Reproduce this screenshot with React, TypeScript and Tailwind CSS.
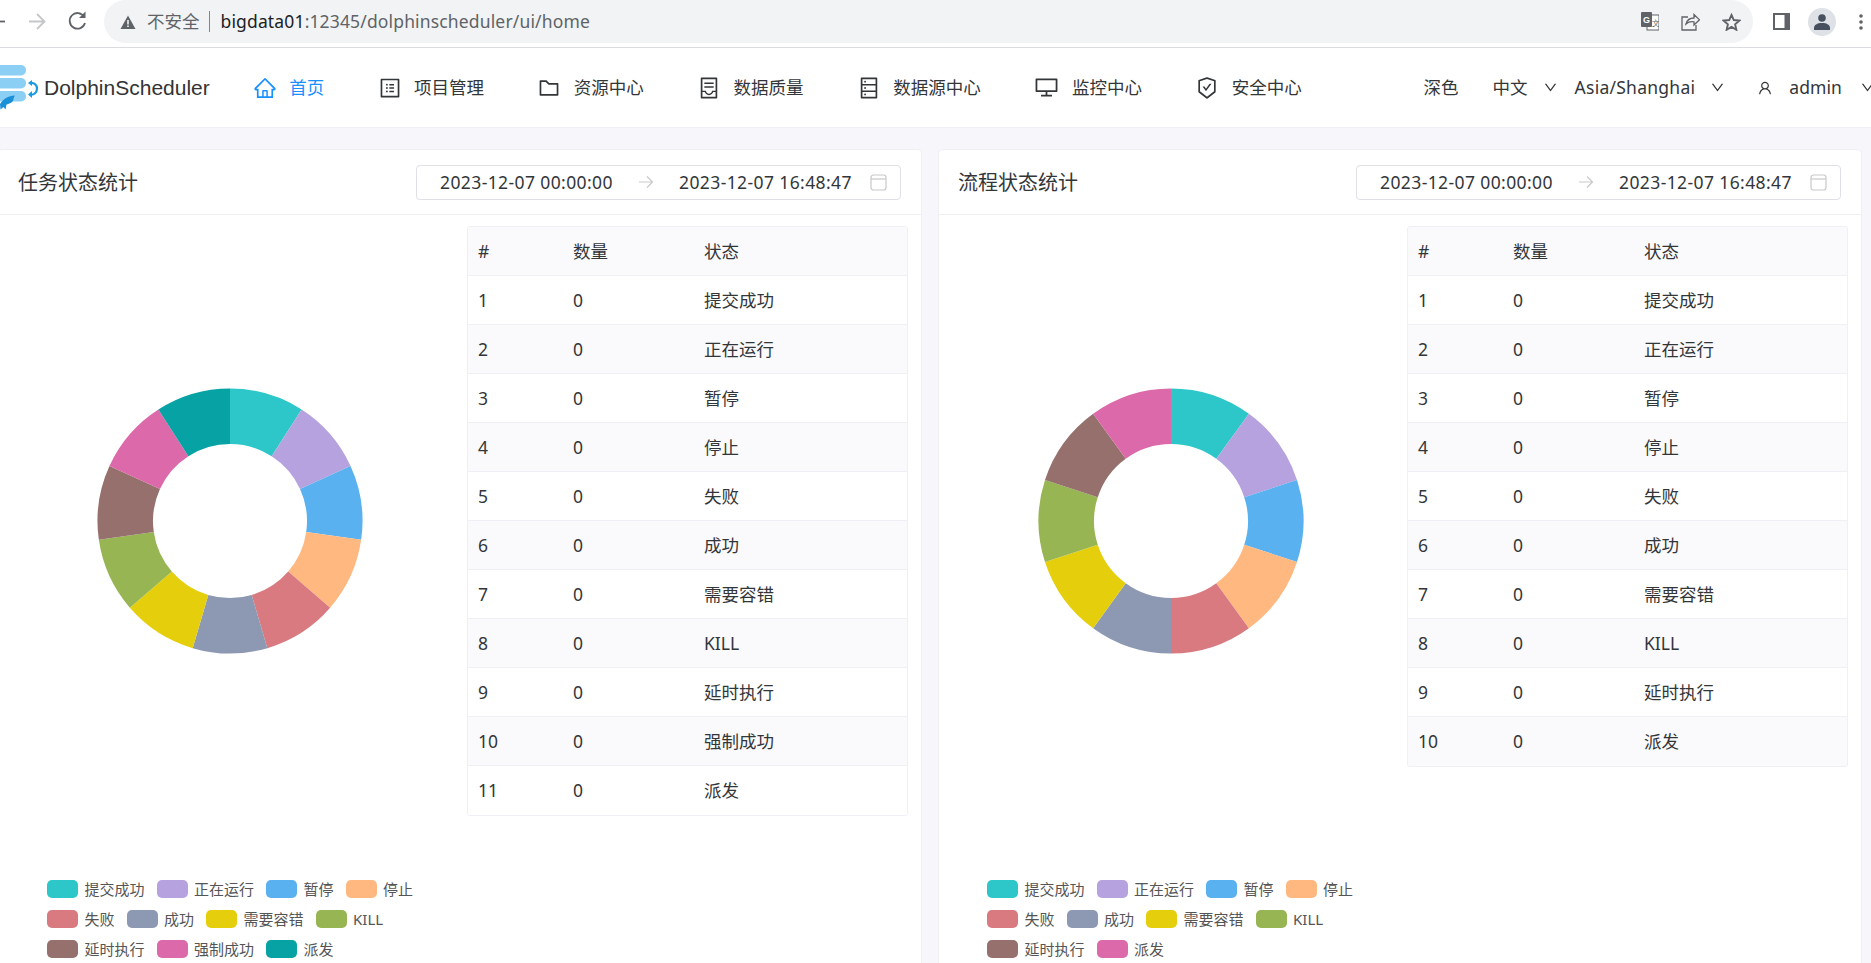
import React from "react";
import {
  AiOutlineHome,
  AiOutlineProfile,
  AiOutlineFolder,
  AiOutlineContainer,
  AiOutlineDatabase,
  AiOutlineDesktop,
  AiOutlineSafetyCertificate,
  AiOutlineUser,
  AiOutlineDown,
} from "react-icons/ai";

const COLORS = ["#2ec7c9", "#b6a2de", "#5ab1ef", "#ffb980", "#d87a80", "#8d98b3", "#e5cf0d", "#97b552", "#95706d", "#dc69aa", "#07a2a4"];
const TASK = ["提交成功", "正在运行", "暂停", "停止", "失败", "成功", "需要容错", "KILL", "延时执行", "强制成功", "派发"];
const FLOW = ["提交成功", "正在运行", "暂停", "停止", "失败", "成功", "需要容错", "KILL", "延时执行", "派发"];
const FLOW_COLORS = COLORS.slice(0, 9).concat("#dc69aa");

function Donut({ colors }: { colors: string[] }) {
  const n = colors.length;
  const c = 133;
  const R = 132.5;
  const r = 77;
  const pt = (rad: number, a: number) => `${(c + rad * Math.sin(a)).toFixed(2)} ${(c - rad * Math.cos(a)).toFixed(2)}`;
  return (
    <svg width="266" height="266" viewBox="0 0 266 266" className="block">
      {colors.map((col, i) => {
        const a0 = (i / n) * Math.PI * 2;
        const a1 = ((i + 1) / n) * Math.PI * 2;
        return (
          <path
            key={i}
            fill={col}
            d={`M${pt(R, a0)}A${R} ${R} 0 0 1 ${pt(R, a1)}L${pt(r, a1)}A${r} ${r} 0 0 0 ${pt(r, a0)}Z`}
          />
        );
      })}
    </svg>
  );
}

function Legend({ names, colors }: { names: string[]; colors: string[] }) {
  return (
    <div className="mt-[226px] ml-[48px] flex w-[410px] flex-wrap gap-x-[12px] gap-y-[12px]">
      {names.map((name, i) => (
        <div key={name} className="flex h-[18px] items-center gap-[6.5px]">
          <span className="h-[18px] w-[31px] rounded-[5px]" style={{ backgroundColor: colors[i] }} />
          <span className="text-[15px] leading-[18px] text-[#555]">{name}</span>
        </div>
      ))}
    </div>
  );
}

function Table({ names }: { names: string[] }) {
  const rowClass = "grid h-[49px] grid-cols-[95px_131px_1fr] items-center pl-[10px] text-[17.5px] text-[#333639]";
  return (
    <div className="h-fit w-[441px] overflow-hidden rounded-[3px] border border-[#efeff5]">
      <div className={`${rowClass} border-b border-[#efeff5] bg-[#fafafc]`}>
        <span>#</span>
        <span>数量</span>
        <span>状态</span>
      </div>
      {names.map((name, i) => (
        <div
          key={name}
          className={`${rowClass} ${i < names.length - 1 ? "border-b border-[#efeff5]" : "h-[48px]"} ${i % 2 === 1 ? "bg-[#fafafc]" : "bg-white"}`}
        >
          <span>{i + 1}</span>
          <span>0</span>
          <span>{name}</span>
        </div>
      ))}
    </div>
  );
}

function DatePicker() {
  return (
    <div className="flex h-[35px] w-[485px] items-center rounded-[4px] border border-[#e0e0e6] pl-[23px] text-[17.5px] tracking-[0.4px] text-[#333639]">
      <span className="w-[172px] whitespace-nowrap">2023-12-07 00:00:00</span>
      <svg width="16" height="14" viewBox="0 0 16 14" fill="none" stroke="#c8c9cc" strokeWidth="1.2" className="ml-[26px]">
        <path d="M1 7h13.5M9 1.5 14.5 7 9 12.5" />
      </svg>
      <span className="ml-[25px] w-[172px] whitespace-nowrap">2023-12-07 16:48:47</span>
      <svg width="17" height="17" viewBox="0 0 17 17" fill="none" stroke="#c8c9cc" strokeWidth="1.2" className="ml-[19px]">
        <rect x="1" y="1" width="15" height="15" rx="2.5" />
        <path d="M1 5h15" />
      </svg>
    </div>
  );
}

function Card({ title, names, colors, first }: { title: string; names: string[]; colors: string[]; first?: boolean }) {
  return (
    <section className="h-[830px] w-[924px] shrink-0 rounded-[4px] border border-[#efeff5] bg-white">
      <header className="flex h-[65px] items-center justify-between border-b border-[#efeff5] pr-[20px] pl-[19px]">
        <h2 className="pt-[2px] text-[20px] leading-none font-normal text-[#333639]">{title}</h2>
        <DatePicker />
      </header>
      <div className="flex justify-between pt-[11px] pr-[13px]">
        <div className="w-[460px]">
          <div className={first ? "mt-[162px] ml-[98px]" : "mt-[162px] ml-[99px]"}>
            <Donut colors={colors} />
          </div>
          <Legend names={names} colors={colors} />
        </div>
        <Table names={names} />
      </div>
    </section>
  );
}

function NavItem({ icon, label, active, gap = 12.5 }: { icon: React.ReactNode; label: string; active?: boolean; gap?: number }) {
  return (
    <div className={`flex items-center ${active ? "text-[#1890ff]" : "text-[#333639]"}`} style={{ gap }}>
      {icon}
      <span className="text-[17.5px] whitespace-nowrap">{label}</span>
    </div>
  );
}

function Logo() {
  return (
    <div className="flex items-center">
      <svg width="42" height="50" viewBox="0 0 42 50" className="shrink-0">
        <rect x="-12" y="2" width="38" height="10.5" rx="5" fill="#8ccff5" />
        <rect x="-12" y="15" width="38" height="10.5" rx="5" fill="#8ccff5" />
        <rect x="-12" y="28" width="38" height="10.5" rx="5" fill="#8ccff5" />
        <path d="M0 41c3-5 8-8 15-8.500-1 1.500-1.500 2.500-1.500 3.500 0 3-4 5-7 5.500l-1 5-2-2.500-3 2.500z" fill="#1a90d8" />
        <path d="M30 20c4-1 7 2 7 5.500s-3 7-7 6" fill="none" stroke="#1a9ae0" strokeWidth="2.2" />
        <path d="M32 17l-4 3 4 3zM32 28l-4 3.500 4 3.500z" fill="#1a9ae0" />
      </svg>
      <span className="ml-[2px] font-['Liberation_Sans',sans-serif] text-[21px] text-[#333]">DolphinScheduler</span>
    </div>
  );
}

function BrowserBar() {
  return (
    <div className="flex h-[48px] items-start border-b border-[#dadce0] bg-white">
      <svg width="104" height="43" viewBox="0 0 104 43" fill="none" className="shrink-0">
        <path d="M-4 21.500h9" stroke="#5f6368" strokeWidth="1.8" />
        <path d="M29 21.500h15M37 14l7.500 7.500L37 29" stroke="#c4c7ca" strokeWidth="1.8" />
        <path d="M84 16.500a7.800 7.800 0 1 0 1 6.500" stroke="#5f6368" strokeWidth="1.8" />
        <path d="M85.500 11.500v6.500H79z" fill="#5f6368" />
      </svg>
      <div className="flex h-[43px] flex-1 items-center rounded-full bg-[#f1f3f4] pl-[16px]">
        <svg width="16" height="14" viewBox="0 0 16 14" className="shrink-0">
          <path d="M8 .5 15.500 14H.5z" fill="#5f6368" />
          <path d="M7.200 5h1.600v4.500H7.200zM7.200 10.500h1.600V12H7.200z" fill="#f1f3f4" />
        </svg>
        <span className="ml-[11px] text-[17.5px] text-[#5f6368]">不安全</span>
        <span className="ml-[9px] h-[21px] w-px bg-[#80868b]" />
        <span className="ml-[11px] text-[17.5px] tracking-[0.15px] whitespace-nowrap text-[#5f6368]">
          <span className="text-[#202124]">bigdata01</span>:12345/dolphinscheduler/ui/home
        </span>
        <div className="ml-auto flex items-center gap-[22px] pr-[12px]">
          <svg width="18" height="19" viewBox="0 0 18 19">
            <rect x="6" y="3" width="12" height="15" fill="#fff" stroke="#5f6368" strokeWidth="1" />
            <rect x="0" y="0" width="11" height="15" rx="1" fill="#5f6368" />
            <text x="2" y="11" fontSize="9" fontWeight="700" fill="#fff" fontFamily="Liberation Sans">G</text>
            <text x="11" y="14" fontSize="8" fill="#5f6368" fontFamily="Liberation Sans">文</text>
          </svg>
          <svg width="19" height="18" viewBox="0 0 19 18" fill="none" stroke="#5f6368" strokeWidth="1.3">
            <path d="M7 4H1v13h14v-5" />
            <path d="M5 11c1-4 4-6 8-6V1.500l5.500 5.300-5.500 5.200V8.800C10 8.500 7 9 5 11z" />
          </svg>
          <svg width="19" height="18" viewBox="0 0 24 23" fill="none" stroke="#5f6368" strokeWidth="2.4">
            <path d="M12 2.500 14.900 9 22 9.700l-5.400 4.700 1.600 7-6.200-3.700-6.200 3.700 1.600-7L2 9.700 9.100 9z" />
          </svg>
        </div>
      </div>
      <div className="flex h-[43px] items-center pr-[8px]">
        <svg width="17" height="17" viewBox="0 0 17 17" className="ml-[20px]">
          <rect width="17" height="17" fill="#5f6368" />
          <rect x="2" y="2" width="9.500" height="13" fill="#fff" />
        </svg>
        <div className="ml-[18px] flex h-[28px] w-[28px] items-center justify-center rounded-full bg-[#dee1e6]">
          <svg width="16" height="16" viewBox="0 0 16 16" fill="#47505f">
            <circle cx="8" cy="4" r="3.800" />
            <path d="M0 16v-2c0-3 3-5 8-5s8 2 8 5v2z" />
          </svg>
        </div>
        <svg width="4" height="16" viewBox="0 0 4 16" fill="#5f6368" className="ml-[23px]">
          <circle cx="2" cy="2" r="1.800" />
          <circle cx="2" cy="8" r="1.800" />
          <circle cx="2" cy="14" r="1.800" />
        </svg>
      </div>
    </div>
  );
}

function TopNav() {
  return (
    <nav className="flex h-[80px] items-center border-b border-[#efeff5] bg-white text-[#333639]">
      <Logo />
      <div className="ml-[43px] flex items-center gap-[53.25px]">
        <NavItem active icon={<AiOutlineHome size={24} />} label="首页" />
        <NavItem icon={<AiOutlineProfile size={24} />} label="项目管理" />
        <NavItem icon={<AiOutlineFolder size={24} />} label="资源中心" />
        <NavItem icon={<AiOutlineContainer size={24} />} label="数据质量" />
        <NavItem icon={<AiOutlineDatabase size={24} />} label="数据源中心" />
        <NavItem gap={13} icon={<AiOutlineDesktop size={25} />} label="监控中心" />
        <NavItem icon={<AiOutlineSafetyCertificate size={24} />} label="安全中心" />
      </div>
      <div className="ml-auto flex items-center text-[17.5px] whitespace-nowrap">
        <span>深色</span>
        <span className="ml-[34px]">中文</span>
        <AiOutlineDown size={15} className="ml-[15px]" />
        <span className="ml-[17px] tracking-[0.25px]">Asia/Shanghai</span>
        <AiOutlineDown size={15} className="ml-[15px]" />
        <AiOutlineUser size={16} className="ml-[32px]" />
        <span className="ml-[16px] tracking-[0.1px]">admin</span>
        <AiOutlineDown size={15} className="mr-[-4px] ml-[18px]" />
      </div>
    </nav>
  );
}

export default function App() {
  return (
    <div className="h-[963px] w-[1871px] overflow-hidden bg-[#f7f7fb] font-['Noto_Sans','Noto_Sans_CJK_SC',sans-serif]">
      <BrowserBar />
      <TopNav />
      <main className="-ml-[2px] flex gap-[16px] pt-[21px]">
        <Card first title="任务状态统计" names={TASK} colors={COLORS} />
        <Card title="流程状态统计" names={FLOW} colors={FLOW_COLORS} />
      </main>
    </div>
  );
}
